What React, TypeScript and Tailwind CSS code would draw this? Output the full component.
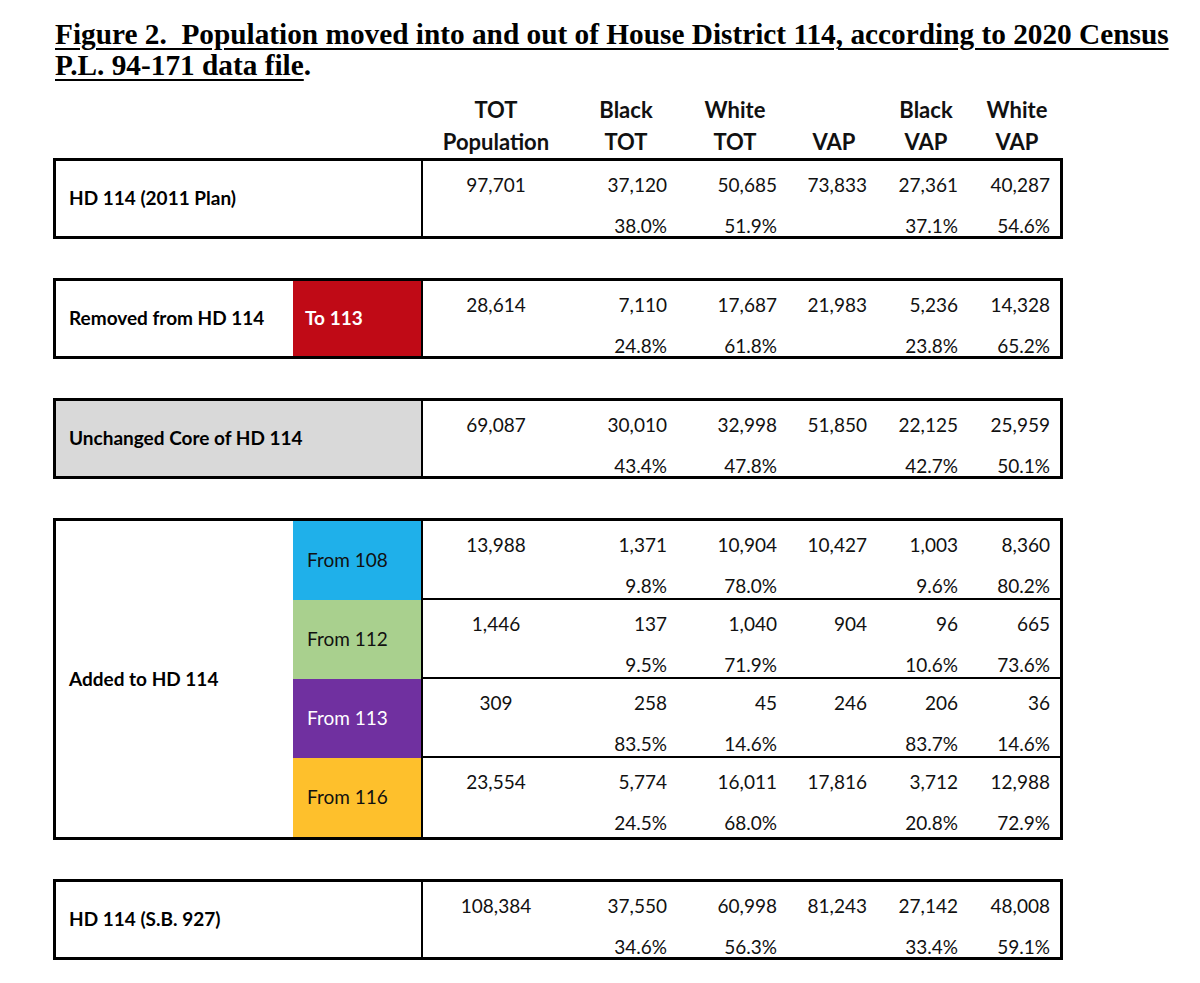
import type { ReactNode } from 'react';

type Row = {
  tot: string;
  black: string;
  white: string;
  vap: string;
  bvap: string;
  wvap: string;
  bp: string;
  wp: string;
  bvp: string;
  wvp: string;
};

const plan2011: Row = { tot: '97,701', black: '37,120', white: '50,685', vap: '73,833', bvap: '27,361', wvap: '40,287', bp: '38.0%', wp: '51.9%', bvp: '37.1%', wvp: '54.6%' };
const removed: Row = { tot: '28,614', black: '7,110', white: '17,687', vap: '21,983', bvap: '5,236', wvap: '14,328', bp: '24.8%', wp: '61.8%', bvp: '23.8%', wvp: '65.2%' };
const core: Row = { tot: '69,087', black: '30,010', white: '32,998', vap: '51,850', bvap: '22,125', wvap: '25,959', bp: '43.4%', wp: '47.8%', bvp: '42.7%', wvp: '50.1%' };
const sb927: Row = { tot: '108,384', black: '37,550', white: '60,998', vap: '81,243', bvap: '27,142', wvap: '48,008', bp: '34.6%', wp: '56.3%', bvp: '33.4%', wvp: '59.1%' };

const added: { label: string; cell: string; row: Row }[] = [
  { label: 'From 108', cell: 'bg-[#1fb0ea] text-[#111]', row: { tot: '13,988', black: '1,371', white: '10,904', vap: '10,427', bvap: '1,003', wvap: '8,360', bp: '9.8%', wp: '78.0%', bvp: '9.6%', wvp: '80.2%' } },
  { label: 'From 112', cell: 'bg-[#a9d08e] text-[#111]', row: { tot: '1,446', black: '137', white: '1,040', vap: '904', bvap: '96', wvap: '665', bp: '9.5%', wp: '71.9%', bvp: '10.6%', wvp: '73.6%' } },
  { label: 'From 113', cell: 'bg-[#7030a0] text-white', row: { tot: '309', black: '258', white: '45', vap: '246', bvap: '206', wvap: '36', bp: '83.5%', wp: '14.6%', bvp: '83.7%', wvp: '14.6%' } },
  { label: 'From 116', cell: 'bg-[#fec02c] text-[#111]', row: { tot: '23,554', black: '5,774', white: '16,011', vap: '17,816', bvap: '3,712', wvap: '12,988', bp: '24.5%', wp: '68.0%', bvp: '20.8%', wvp: '72.9%' } },
];

function Numbers({ r }: { r: Row }) {
  return (
    <div className="grid grid-cols-[146px_98px_110px_90px_91px_92px] grid-rows-[20px_20px] gap-y-[21px] pt-[14px] text-[19px] leading-[20px] text-[#111]">
      <span className="text-center">{r.tot}</span>
      <span className="text-right">{r.black}</span>
      <span className="text-right">{r.white}</span>
      <span className="text-right">{r.vap}</span>
      <span className="text-right">{r.bvap}</span>
      <span className="text-right">{r.wvap}</span>
      <span />
      <span className="text-right">{r.bp}</span>
      <span className="text-right">{r.wp}</span>
      <span />
      <span className="text-right">{r.bvp}</span>
      <span className="text-right">{r.wvp}</span>
    </div>
  );
}

function Box({ left, r }: { left: ReactNode; r: Row }) {
  return (
    <div className="flex h-[81px] border-[3px] border-black">
      {left}
      <div className="flex-1">
        <Numbers r={r} />
      </div>
    </div>
  );
}

export default function App() {
  return (
    <div className="h-[983px] w-[1200px] bg-white font-['Lato',sans-serif] text-black">
      <h1 className="pl-[55px] pt-[19px] font-['Liberation_Serif',serif] text-[29.3px] font-bold leading-[31px]">
        <span className="block whitespace-nowrap">
          <span className="underline decoration-2 underline-offset-[4px]">
            Figure 2.&nbsp; Population moved into and out of House District 114, according to 2020 Census
          </span>
        </span>
        <span className="block whitespace-nowrap">
          <span className="underline decoration-2 underline-offset-[4px]">P.L. 94-171 data file</span>.
        </span>
      </h1>

      {/* column headings */}
      <div className="ml-[423px] mt-[13px] grid grid-cols-[146px_114px_104px_94px_90px_92px] text-center text-[22px] font-bold leading-[32px] text-[#111]">
        <div>TOT<br />Population</div>
        <div>Black<br />TOT</div>
        <div>White<br />TOT</div>
        <div><br />VAP</div>
        <div>Black<br />VAP</div>
        <div>White<br />VAP</div>
      </div>

      <div className="ml-[53px] flex w-[1010px] flex-col gap-[39px]">
        <Box
          r={plan2011}
          left={
            <div className="flex w-[367px] items-center border-r-2 border-black pl-[13px] text-[19px] font-bold">
              HD 114 (2011 Plan)
            </div>
          }
        />

        <Box
          r={removed}
          left={
            <>
              <div className="flex w-[237px] items-center pl-[13px] text-[19px] font-bold">Removed from HD 114</div>
              <div className="flex w-[130px] items-center border-r-2 border-black bg-[#c00a16] pl-[12px] text-[19px] font-bold text-white">
                To 113
              </div>
            </>
          }
        />

        <Box
          r={core}
          left={
            <div className="flex w-[367px] items-center border-r-2 border-black bg-[#d9d9d9] pl-[13px] text-[19px] font-bold">
              Unchanged Core of HD 114
            </div>
          }
        />

        <div className="flex border-[3px] border-black">
          <div className="flex w-[237px] items-center pl-[13px] text-[19px] font-bold">Added to HD 114</div>
          <div className="flex flex-1 flex-col">
            {added.map((a, i) => (
              <div key={a.label} className="flex h-[79px]">
                <div className={`flex w-[130px] items-center border-r-2 border-black pl-[14px] text-[19px] ${a.cell}`}>
                  {a.label}
                </div>
                <div className={`flex-1 ${i < added.length - 1 ? 'border-b-2 border-black' : ''}`}>
                  <Numbers r={a.row} />
                </div>
              </div>
            ))}
          </div>
        </div>

        <Box
          r={sb927}
          left={
            <div className="flex w-[367px] items-center border-r-2 border-black pl-[13px] text-[19px] font-bold">
              HD 114 (S.B. 927)
            </div>
          }
        />
      </div>
    </div>
  );
}
